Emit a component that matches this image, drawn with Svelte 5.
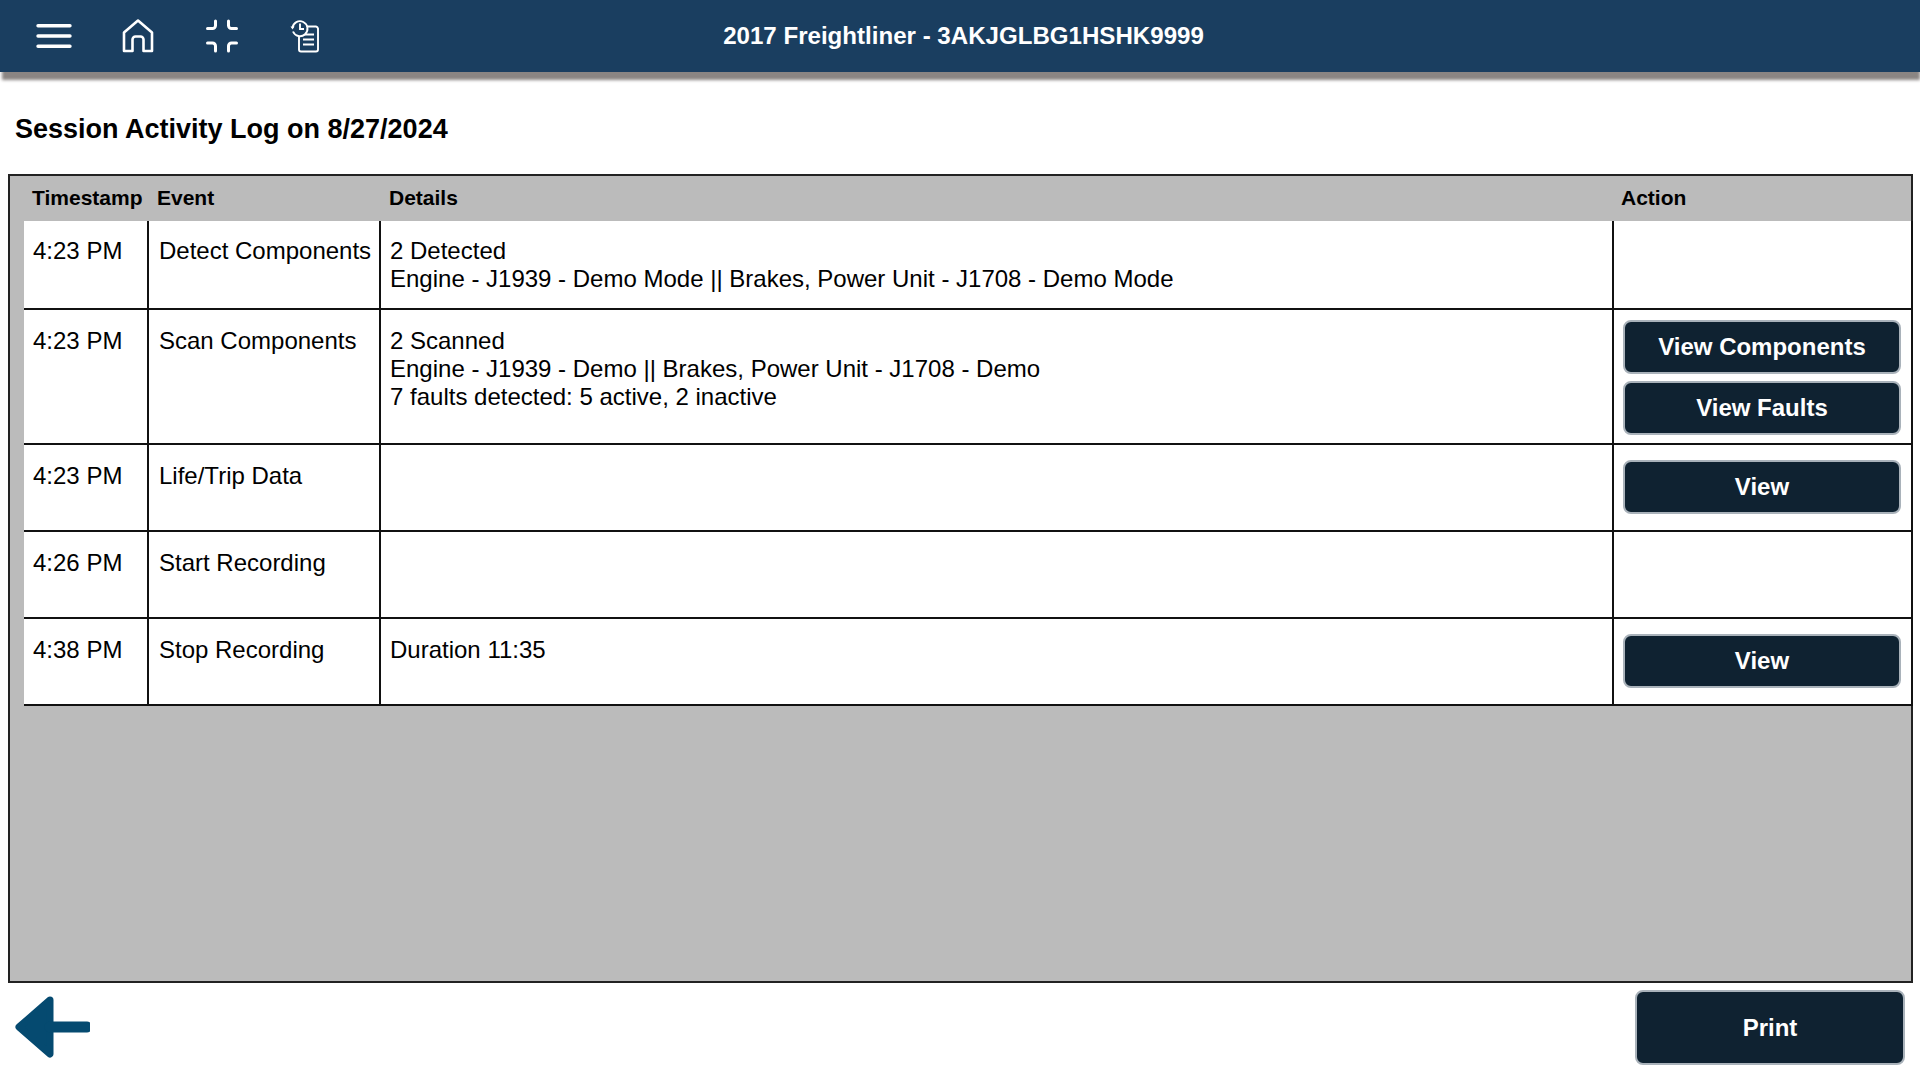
<script>
  const rows = [
    { time: '4:23 PM', event: 'Detect Components', details: ['2 Detected', 'Engine - J1939 - Demo Mode || Brakes, Power Unit - J1708 - Demo Mode'], actions: [], h: 'r1' },
    { time: '4:23 PM', event: 'Scan Components', details: ['2 Scanned', 'Engine - J1939 - Demo || Brakes, Power Unit - J1708 - Demo', '7 faults detected: 5 active, 2 inactive'], actions: ['View Components', 'View Faults'], h: 'r2' },
    { time: '4:23 PM', event: 'Life/Trip Data', details: [], actions: ['View'], h: 'r3' },
    { time: '4:26 PM', event: 'Start Recording', details: [], actions: [], h: 'r3' },
    { time: '4:38 PM', event: 'Stop Recording', details: ['Duration 11:35'], actions: ['View'], h: 'r3' }
  ];
</script>

<div class="page">
  <header class="bar">
    <div class="icons">
      <svg class="ic menu" viewBox="0 0 36 24" width="36" height="24"><path d="M2 1.700h32M2 12h32M2 22.300h32" fill="none" stroke="#fff" stroke-width="3.400" stroke-linecap="round"/></svg>
      <svg class="ic home" viewBox="0 0 32 34" width="32" height="34"><path d="M2 32V13.500L16 1.500l14 12V32h-8.500V20.500a3 3 0 0 0-3-3h-5a3 3 0 0 0-3 3V32z" fill="none" stroke="#fff" stroke-width="2.600" stroke-linejoin="round"/></svg>
      <svg class="ic shrink" viewBox="0 0 34 34" width="34" height="34"><path d="M10.500 2V6.500a3 3 0 0 1-3 3H2.500M23.500 2V6.500a3 3 0 0 0 3 3H31.500M2.500 24h5a3 3 0 0 1 3 3V32M31.500 24h-5a3 3 0 0 0-3 3V32" fill="none" stroke="#fff" stroke-width="3" stroke-linecap="round"/></svg>
      <svg class="ic log" viewBox="0 0 30 34" width="30" height="34"><path d="M14 7.500h12a2.500 2.500 0 0 1 2 2V30.500a2 2 0 0 1-2 2H11a2 2 0 0 1-2-2V17" fill="none" stroke="#fff" stroke-width="1.900"/><path d="M13 15.500h11M13 20.500h11M13 25.500h11" stroke="#fff" stroke-width="1.900" fill="none"/><path d="M3 12.500a7.500 7.500 0 1 0-.500-3.500" fill="#1a3e60" stroke="#fff" stroke-width="1.900"/><path d="M10 4.500v5.500h4" fill="none" stroke="#fff" stroke-width="1.900"/><path d="M.5 7.500h4l-2 3z" fill="#fff"/></svg>
    </div>
    <div class="title">2017 Freightliner - 3AKJGLBG1HSHK9999</div>
  </header>

  <h1>Session Activity Log on 8/27/2024</h1>

  <section class="box">
    <div class="head row">
      <div class="th c1">Timestamp</div>
      <div class="th c2">Event</div>
      <div class="th c3">Details</div>
      <div class="th c4">Action</div>
    </div>
    <div class="body">
      {#each rows as r}
        <div class="row line {r.h}">
          <div class="td c1">{r.time}</div>
          <div class="td c2 sep">{r.event}</div>
          <div class="td c3 sep">{#each r.details as d}<div>{d}</div>{/each}</div>
          <div class="td c4 sep acts">
            {#each r.actions as a}<button>{a}</button>{/each}
          </div>
        </div>
      {/each}
    </div>
  </section>

  <footer>
    <svg class="back" viewBox="0 0 76 64" width="76" height="64"><path d="M36 5L5 32l31 27V5z" fill="#054a70" stroke="#054a70" stroke-width="7" stroke-linejoin="round"/><path d="M36 32h37" stroke="#054a70" stroke-width="11" stroke-linecap="round"/></svg>
    <button class="print">Print</button>
  </footer>
</div>

<style>
  :global(body) { margin: 0; background: #fff; font-family: "Liberation Sans", Arial, sans-serif; color: #000; }
  .page { width: 1920px; height: 1080px; display: flex; flex-direction: column; overflow: hidden; }
  .bar { height: 72px; background: #1a3e60; box-shadow: 1px 9px 3px -1px #8a8583; position: relative; display: flex; align-items: center; justify-content: center; flex: none; }
  .icons { position: absolute; left: 36px; top: 0; height: 72px; display: flex; align-items: center; }
  .ic { display: block; flex: none; }
  .home { margin-left: 50px; }
  .shrink { margin-left: 51px; }
  .log { margin-left: 51px; }
  .title { color: #fff; font-weight: 700; font-size: 24.100px; padding-left: 7px; }
  h1 { margin: 0; font-size: 27px; font-weight: 700; line-height: 32px; padding: 41px 0 0 15px; height: 61px; box-sizing: content-box; }
  .box { margin: 0 7px 0 8px; height: 809px; flex: none; box-sizing: border-box; border: 2px solid #222; background: #bbb; }
  .row { display: flex; }
  .head { height: 45px; box-sizing: border-box; padding-bottom: 2px; align-items: center; font-weight: 700; font-size: 21px; }
  .th { box-sizing: border-box; }
  .head .c1 { width: 147px; padding-left: 22px; }
  .head .c2 { width: 232px; }
  .head .c3 { width: 1232px; }
  .head .c4 { flex: 1; }
  .body { margin: 0 0 0 14px; background: #fff; width: 1887px; border-right: 2px solid #111; }
  .line { border-bottom: 2px solid #111; box-sizing: border-box; font-size: 24px; line-height: 28px; }
  .r1 { height: 89px; }
  .r2 { height: 135px; }
  .r3 { height: 87px; }
  .td { box-sizing: border-box; padding-top: 16px; }
  .r2 .td { padding-top: 17px; }
  .r3 .td { padding-top: 17px; }
  .sep { border-left: 2px solid #111; }
  .line .c1 { width: 123px; padding-left: 9px; }
  .line .c2 { width: 232px; padding-left: 10px; white-space: nowrap; }
  .line .c3 { width: 1233px; padding-left: 9px; }
  .line .c4 { flex: 1; }
  .line .acts { display: flex; flex-direction: column; gap: 7px; padding: 10px 7px 0 9px; }
  .r3 .acts { padding-top: 15px; }
  button { font-family: inherit; font-weight: 700; color: #fff; background: #0f2231; border: 2px solid #a9b2ba; border-radius: 8px; height: 54px; width: 278px; font-size: 24px; padding: 0; flex: none; }
  footer { display: flex; justify-content: space-between; align-items: flex-start; flex: 1; padding: 7px 15px 0 14px; }
  .back { margin-top: 5px; }
  .print { width: 270px; height: 75px; font-size: 24px; }
</style>
